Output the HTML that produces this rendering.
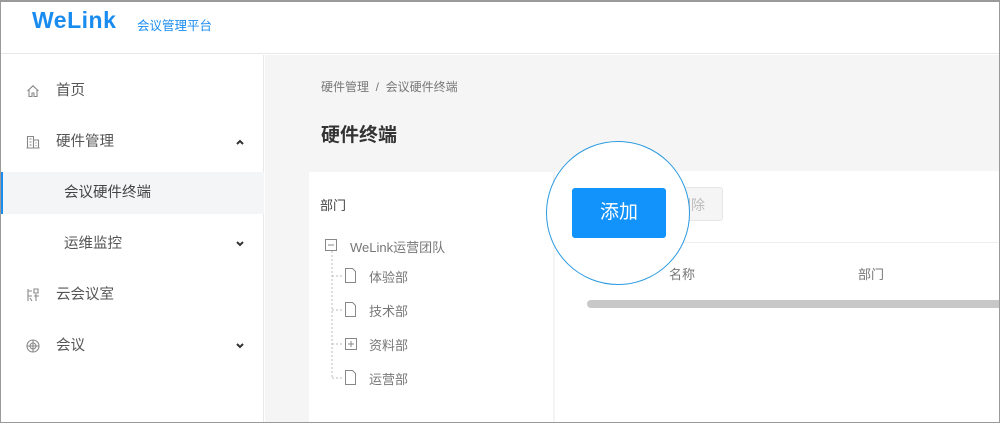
<!DOCTYPE html>
<html><head><meta charset="utf-8"><style>
*{margin:0;padding:0;box-sizing:border-box}
body{width:1000px;height:423px;overflow:hidden;font-family:"Liberation Sans","Noto Sans CJK SC",sans-serif;background:#fff;position:relative}
.frame{position:absolute;left:0;top:0;width:1000px;height:423px;border:1px solid #9a9a9a;border-top:2px solid #9a9a9a;z-index:50;pointer-events:none}
.hdr{position:absolute;left:0;top:0;width:1000px;height:54px;border-bottom:1px solid #e8e8e8;background:#fff}
.logo{position:absolute;left:32px;top:7px;font-size:23px;font-weight:bold;color:#1a8cf0;letter-spacing:0.5px;font-family:"Liberation Sans",sans-serif}
.sub{position:absolute;left:137px;top:15px;font-size:12.5px;color:#1a8cf0}
.side{position:absolute;left:0;top:55px;width:264px;height:368px;background:#fff;border-right:1px solid #e8e8e8}
.it{position:absolute;left:0;width:264px;height:42px;font-size:14.5px;color:#555;line-height:42px}
.it .t{position:absolute;left:56px}
.it .ic{position:absolute;left:26px;top:14px;width:14px;height:14px}
.it .ar{position:absolute;left:235px;top:17px;width:10px;height:8px}
.main{position:absolute;left:265px;top:55px;width:735px;height:368px;background:#f5f5f5}
.card{position:absolute;background:#fff}
.tx{position:absolute;font-size:13px;color:#777;white-space:nowrap}
</style></head><body>
<div class="hdr"><div class="logo">WeLink</div><div class="sub">会议管理平台</div></div>
<div class="side">
 <div class="it" style="top:15px"><svg class="ic" viewBox="0 0 14 14" fill="none" stroke="#888" stroke-width="1.1"><path d="M1.5 7L7 1.8 12.5 7M3 6v6.5h3V9h2v3.5h3V6"/></svg><span class="t">首页</span></div>
 <div class="it" style="top:66px"><svg class="ic" viewBox="0 0 14 14" fill="none" stroke="#888" stroke-width="1.1"><path d="M1.5 13V1.5h6V13M7.5 5h5v8M0.5 13h13M3.5 4h2M3.5 7h2M3.5 10h2M9.5 8h1M9.5 10.5h1"/></svg><span class="t">硬件管理</span><svg class="ar" viewBox="0 0 10 8" fill="none" stroke="#333" stroke-width="2"><path d="M2 6l3-3 3 3"/></svg></div>
 <div class="it" style="top:117px;background:#f4f5f6;border-left:3px solid #1a8cf0;color:#444"><span class="t" style="left:61px">会议硬件终端</span></div>
 <div class="it" style="top:168px"><span class="t" style="left:64px">运维监控</span><svg class="ar" viewBox="0 0 10 8" fill="none" stroke="#333" stroke-width="2"><path d="M2 2l3 3 3-3"/></svg></div>
 <div class="it" style="top:219px"><svg class="ic" viewBox="0 0 14 14" fill="none" stroke="#888" stroke-width="1.1"><path d="M2 1v12M2 3h4M8 1h4v4H8zM8 8h5M10 6v7M2 8h4M4 10l2 3"/></svg><span class="t">云会议室</span></div>
 <div class="it" style="top:270px"><svg class="ic" viewBox="0 0 14 14" fill="none" stroke="#888" stroke-width="1.1"><circle cx="7" cy="7" r="6"/><circle cx="7" cy="7" r="3"/><path d="M1 7h12M7 1v12"/></svg><span class="t">会议</span><svg class="ar" viewBox="0 0 10 8" fill="none" stroke="#333" stroke-width="2"><path d="M2 2l3 3 3-3"/></svg></div>
</div>
<div class="main">
 <div class="tx" style="left:56px;top:23px;font-size:12px;color:#777">硬件管理 &nbsp;/&nbsp; 会议硬件终端</div>
 <div class="tx" style="left:56px;top:65px;font-size:19px;font-weight:bold;color:#333">硬件终端</div>
 <div class="card" style="left:44px;top:117px;width:244px;height:260px"></div>
 <div class="card" style="left:290px;top:116px;width:445px;height:260px"></div>
</div>
<div class="tx" style="left:320px;top:195px;font-size:13px;color:#444">部门</div>
<svg style="position:absolute;left:320px;top:236px" width="40" height="150" fill="none" stroke="#888" stroke-width="1">
 <rect x="5.5" y="3.5" width="11" height="11"/><path d="M8 9h6"/>
 <path d="M12 15v127M12 40h11M12 74h11M12 108h11M12 142h11" stroke="#bbb" stroke-dasharray="2 2"/>
 <path d="M25.5 32.5h7l3 3v11h-10z"/><path d="M25.5 66.5h7l3 3v11h-10z"/>
 <rect x="25.5" y="102.5" width="11" height="11"/><path d="M28 108h6M31 105v6"/>
 <path d="M25.5 134.5h7l3 3v11h-10z"/>
</svg>
<div class="tx" style="left:350px;top:237px">WeLink运营团队</div>
<div class="tx" style="left:369px;top:267px">体验部</div>
<div class="tx" style="left:369px;top:301px">技术部</div>
<div class="tx" style="left:369px;top:335px">资料部</div>
<div class="tx" style="left:369px;top:369px">运营部</div>
<div style="position:absolute;left:555px;top:242px;width:443px;height:1px;background:#eee"></div>
<div style="position:absolute;left:683px;top:187px;width:40px;height:34px;border:1px solid #e6e6e6;background:#f5f5f5;border-radius:3px"></div>
<div class="tx" style="left:677px;top:195px;color:#bbb;font-size:14px">删除</div>
<div class="tx" style="left:669px;top:264px">名称</div>
<div class="tx" style="left:858px;top:264px">部门</div>
<div style="position:absolute;left:587px;top:300px;width:413px;height:8px;background:#c8c8c8;border-radius:4px 0 0 4px"></div>
<div style="position:absolute;left:546px;top:141px;width:144px;height:144px;border-radius:50%;border:1.5px solid #2a9ae0;background:#fff;z-index:5"></div>
<div style="position:absolute;left:572px;top:188px;width:94px;height:50px;background:#1292fb;border-radius:3px;color:#fff;font-size:19px;line-height:50px;text-align:center;z-index:6">添加</div>
<div style="position:absolute;left:553px;top:176px;width:1px;height:30px;background:#eee;z-index:4"></div>
<div class="frame"></div>
</body></html>
